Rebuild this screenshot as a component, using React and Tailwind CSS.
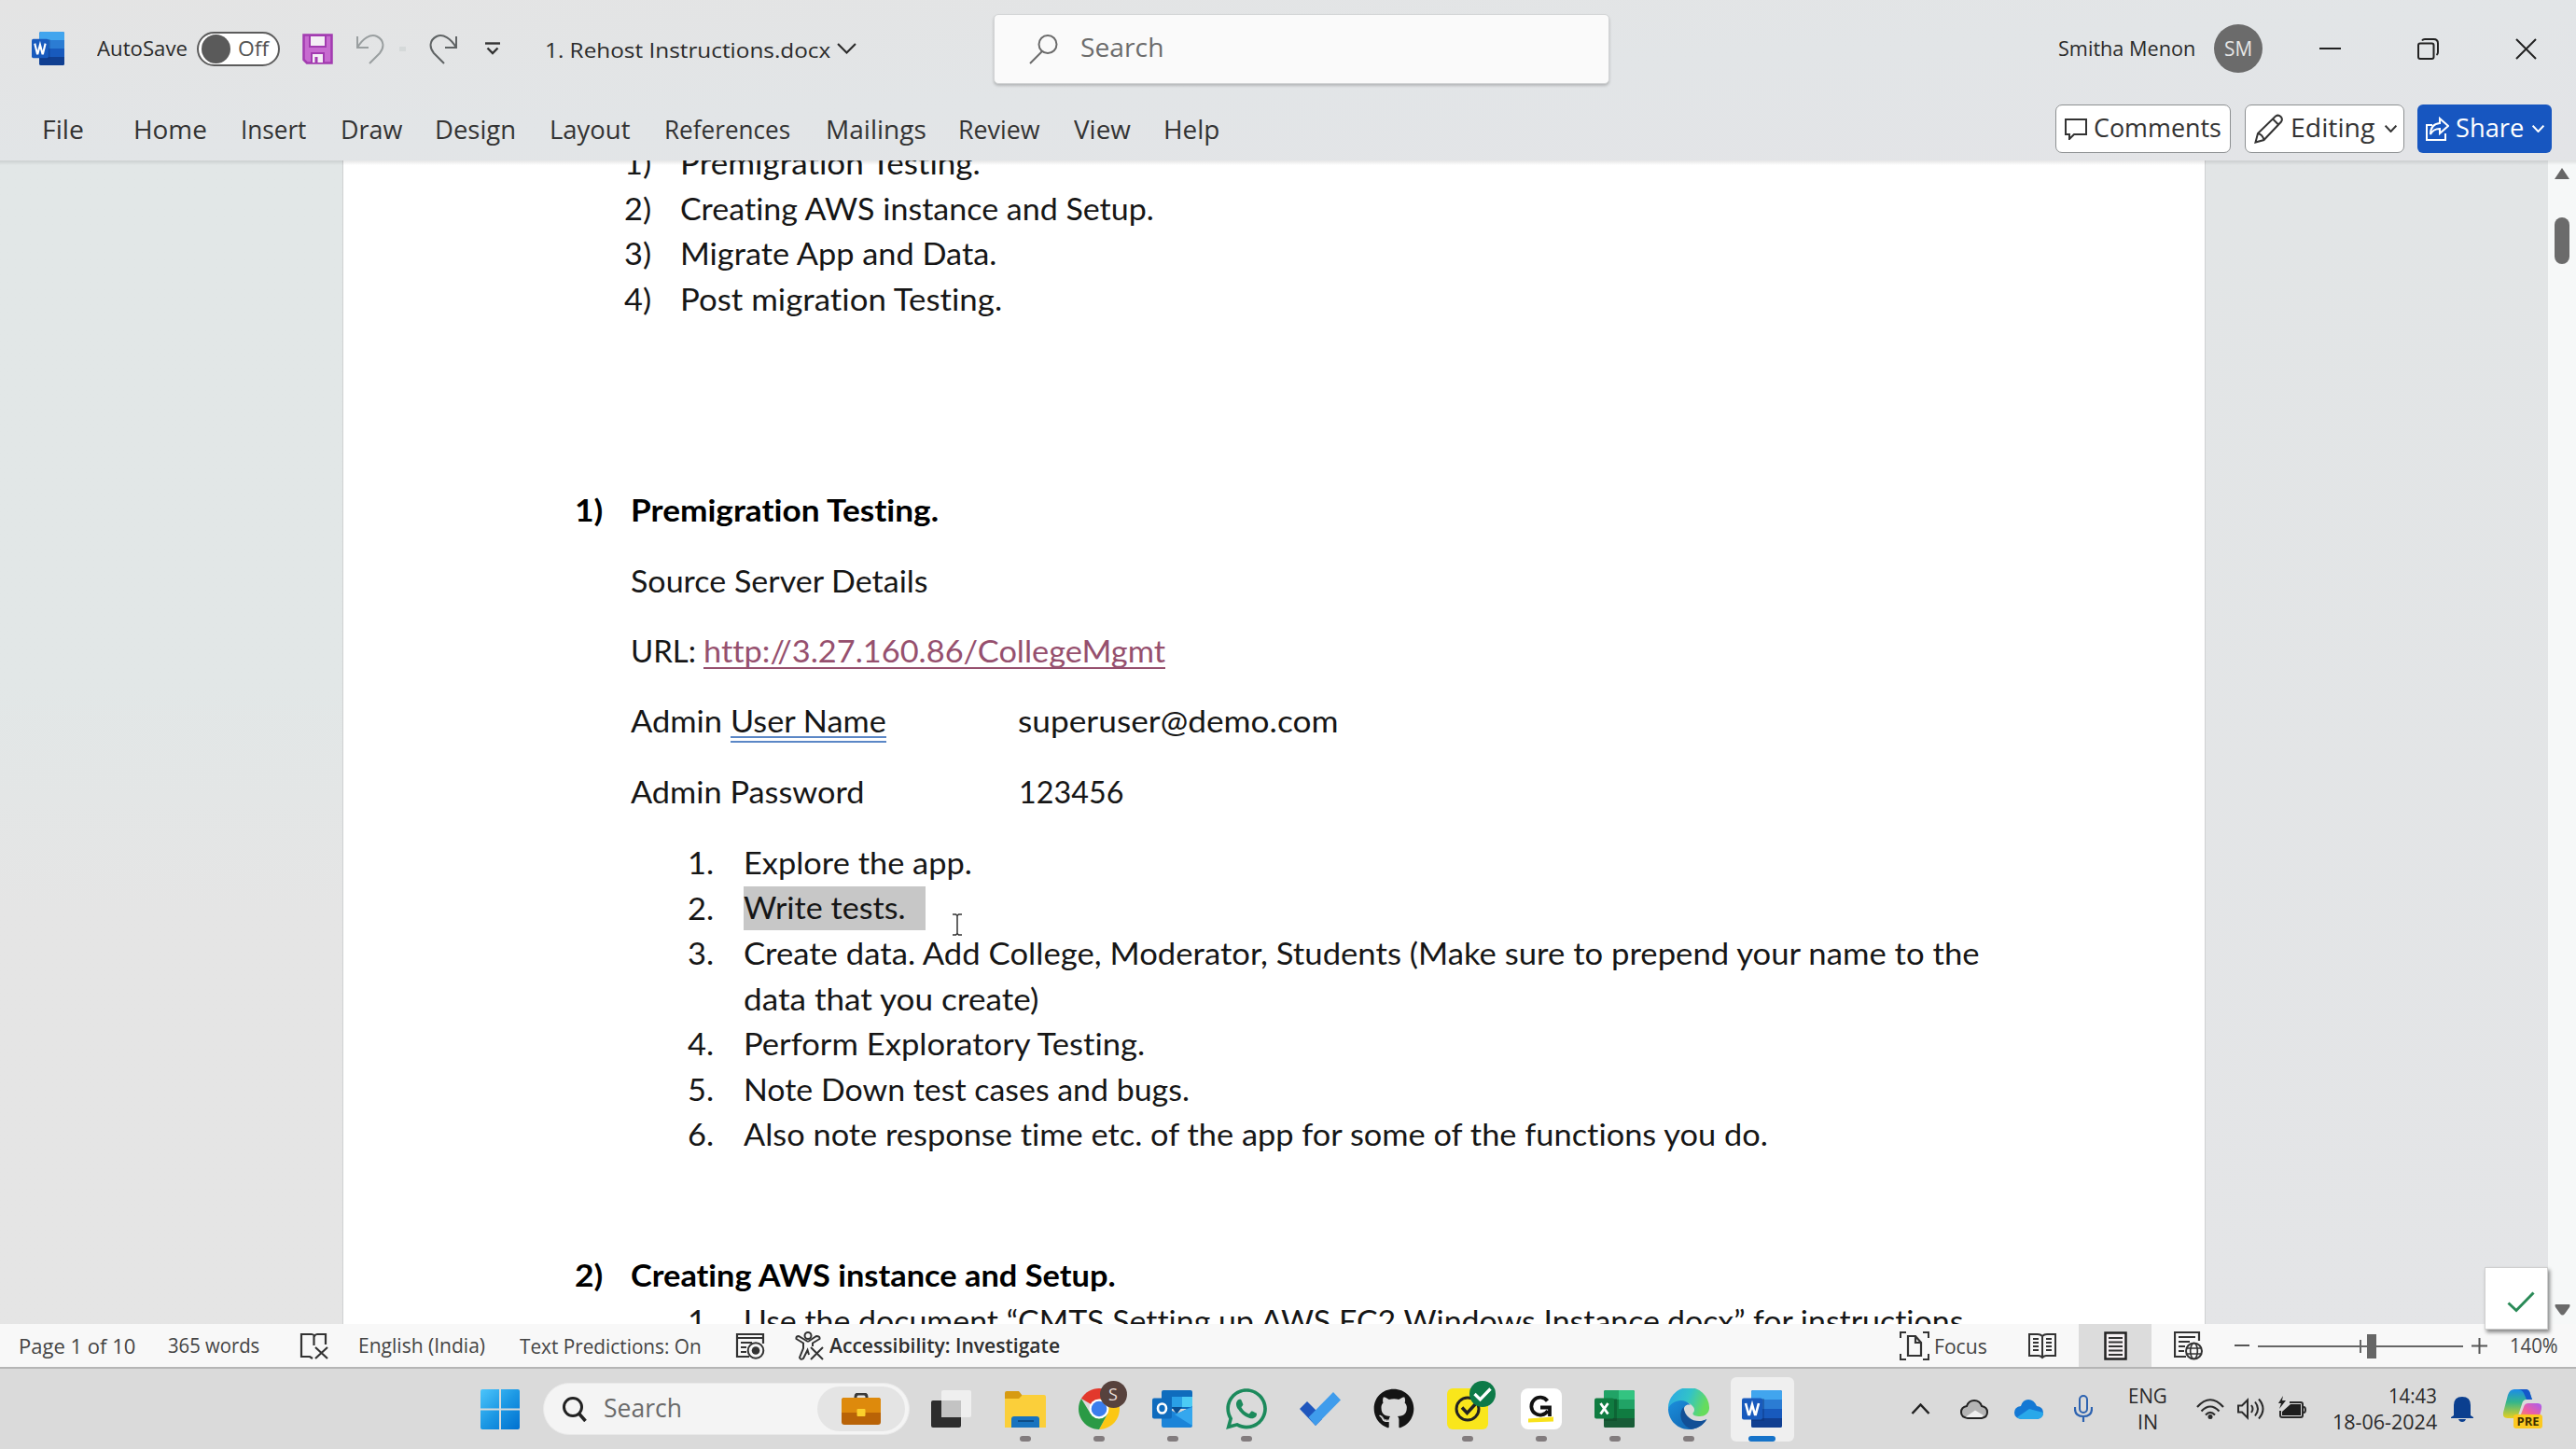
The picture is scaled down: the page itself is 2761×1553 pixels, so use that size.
import React, { useLayoutEffect, useRef, useState } from "react";
import { FaGithub, FaWhatsapp } from "react-icons/fa";

/* Text whose glyphs are condensed or widened to fill the width given in its classes. */
function T({ className = "", inner = "", children }) {
  const box = useRef(null);
  const text = useRef(null);
  const [scale, setScale] = useState(1);
  useLayoutEffect(() => {
    setScale(box.current.offsetWidth / text.current.offsetWidth);
  }, []);
  return (
    <span ref={box} className={`inline-block shrink-0 whitespace-nowrap ${className}`}>
      <span ref={text} className={`inline-block origin-left ${inner}`} style={{ transform: `scaleX(${scale})` }}>
        {children}
      </span>
    </span>
  );
}

function Svg({ className, box, children }) {
  return (
    <svg className={`block shrink-0 ${className}`} viewBox={box} fill="none" preserveAspectRatio="none">
      {children}
    </svg>
  );
}

function Chevron({ className, w = 2 }) {
  return (
    <Svg className={className} box="0 0 20 12">
      <path d="M1 1 L10 10.5 L19 1" stroke="currentColor" strokeWidth={w} />
    </Svg>
  );
}

function WordIcon({ className }) {
  return (
    <Svg className={className} box="0 0 43 40">
      <rect x="10" y="0" width="33" height="40" rx="2" fill="#185abd" />
      <path d="M12 0h29a2 2 0 0 1 2 2v9H10V2a2 2 0 0 1 2-2z" fill="#41a5ee" />
      <rect x="10" y="10" width="33" height="10" fill="#2b7cd3" />
      <rect x="10" y="20" width="33" height="10" fill="#185abd" />
      <path d="M10 30h33v8a2 2 0 0 1-2 2H12a2 2 0 0 1-2-2z" fill="#103f91" />
      <rect x="10" y="9" width="14" height="24" fill="#0b2f70" opacity=".35" />
      <rect x="0" y="8.500" width="22" height="23" rx="2" fill="#185abd" />
      <path d="M4 14l3.200 12h.8L11 15.500 14 26h.8L18 14" stroke="#fff" strokeWidth="2.600" />
    </Svg>
  );
}

function TitleBar() {
  return (
    <div className="flex h-[104px] items-center text-[21.5px] text-[#2b2b2b]">
      <WordIcon className="ml-[34px] h-[36px] w-[35px]" />
      <T className="ml-[35px] w-[97px]">AutoSave</T>
      <div className="ml-[10px] flex h-[37px] w-[89px] items-center rounded-full border-2 border-[#5c5c5c] bg-white">
        <div className="ml-[3px] size-[31px] shrink-0 rounded-full bg-[#5a5a5a]" />
        <T className="ml-[8px] w-[33px] text-[#555]">Off</T>
      </div>
      <Svg className="ml-[24px] h-[33px] w-[33px]" box="0 0 33 33">
        <path d="M1.500 1.500h30v30H5l-3.500-3.500z" fill="#c76bd0" stroke="#a23bb0" strokeWidth="2.500" />
        <path d="M8 2h17v12H8z" fill="#f4eef5" stroke="#a23bb0" strokeWidth="2" />
        <path d="M10 31V21h13v10" fill="#f4eef5" stroke="#a23bb0" strokeWidth="2" />
        <path d="M15 31v-6" stroke="#a23bb0" strokeWidth="3" />
      </Svg>
      <Svg className="ml-[24px] h-[33px] w-[31px]" box="0 0 31 33">
        <path d="M2 3v12h12M2 15C8 5 16 0 23 3c8 4 8 12 3 18L15 32" stroke="#9a9fa0" strokeWidth="2" />
      </Svg>
      <div className="ml-[16px] h-[5px] w-[7px] bg-[#d5d9d9]" />
      <Svg className="ml-[25px] h-[33px] w-[31px]" box="0 0 31 33">
        <path d="M29 3v12H17M29 15C23 5 15 0 8 3 0 7 0 15 5 21l11 11" stroke="#5f6364" strokeWidth="2" />
      </Svg>
      <Svg className="ml-[29px] h-[14px] w-[16px]" box="0 0 16 14">
        <path d="M0 1.500h16" stroke="#333" strokeWidth="2.400" />
        <path d="M2.500 6.500L8 12l5.500-5.500" stroke="#333" strokeWidth="2.400" />
      </Svg>
      <T className="ml-[48px] mt-[3px] w-[306px] text-[22.5px]">1. Rehost Instructions.docx</T>
      <Chevron className="ml-[7px] h-[12px] w-[21px]" />
      <div className="ml-[147px] flex h-[75px] w-[660px] shrink-0 items-center rounded-[5px] border border-[#d2d4d5] bg-[#fafafa] shadow-[0_2px_3px_rgba(0,0,0,0.2)]">
        <Svg className="ml-[37px] h-[33px] w-[31px]" box="0 0 31 33">
          <circle cx="20" cy="11.500" r="9.500" stroke="#6a6a6a" strokeWidth="2" />
          <path d="M14 19L1 32" stroke="#6a6a6a" strokeWidth="2" />
        </Svg>
        <T className="-mt-[2px] ml-[24px] w-[90px] text-[27px] text-[#6c6c6c]">Search</T>
      </div>
      <T className="ml-[481px] w-[147px]">Smitha Menon</T>
      <div className="ml-[20px] flex size-[52px] shrink-0 items-center justify-center rounded-full bg-[#6b6b6b] text-[#e6e6e6]">
        <T className="w-[30px]">SM</T>
      </div>
      <div className="ml-[61px] h-[2px] w-[23px] shrink-0 bg-[#222]" />
      <Svg className="ml-[82px] h-[23px] w-[23px]" box="0 0 23 23">
        <rect x="1" y="5.500" width="16.500" height="16.500" rx="2" stroke="#222" strokeWidth="2" />
        <path d="M5 2.500Q6 1 8 1h9.500q4.500 0 4.500 4.500V15q0 2-1.500 3" stroke="#222" strokeWidth="2" />
      </Svg>
      <Svg className="ml-[82px] h-[23px] w-[23px]" box="0 0 23 23">
        <path d="M1 1l21 21M22 1L1 22" stroke="#222" strokeWidth="2" />
      </Svg>
    </div>
  );
}

function Tabs() {
  return (
    <div className="flex h-[68px] items-center text-[26.5px] text-[#333]">
      <div className="mt-[4px] flex items-center">
        <T className="ml-[45px] w-[45px]">File</T>
        <T className="ml-[53px] w-[79px]">Home</T>
        <T className="ml-[36px] w-[70px]">Insert</T>
        <T className="ml-[37px] w-[66px]">Draw</T>
        <T className="ml-[35px] w-[87px]">Design</T>
        <T className="ml-[36px] w-[86px]">Layout</T>
        <T className="ml-[37px] w-[135px]">References</T>
        <T className="ml-[38px] w-[108px]">Mailings</T>
        <T className="ml-[34px] w-[88px]">Review</T>
        <T className="ml-[36px] w-[61px]">View</T>
        <T className="ml-[35px] w-[60px]">Help</T>
      </div>
      <div className="ml-auto mr-[26px] flex text-[26.5px]">
        <div className="flex h-[52px] w-[188px] items-center rounded-[7px] border border-[#8d9092] bg-white">
          <Svg className="ml-[9px] h-[23px] w-[24px]" box="0 0 24 23">
            <path d="M1 1h22v16H10l-5 5v-5H1z" stroke="#333" strokeWidth="2" />
          </Svg>
          <T className="ml-[7px] w-[137px]">Comments</T>
        </div>
        <div className="ml-[15px] flex h-[52px] w-[171px] items-center rounded-[7px] border border-[#8d9092] bg-white">
          <Svg className="ml-[9px] h-[32px] w-[32px]" box="0 0 32 32">
            <path d="M1.500 30.500L4 21 23 2.500q3-2 5.500.500t.500 5.500L10.500 28zM4 21q5 1 6.500 7M20 5.500l6 6" stroke="#333" strokeWidth="2" />
          </Svg>
          <T className="ml-[7px] w-[90px]">Editing</T>
          <Chevron className="ml-[11px] h-[8px] w-[13px]" w={3} />
        </div>
        <div className="ml-[14px] flex h-[52px] w-[144px] items-center rounded-[6px] bg-[#1756c0] text-white">
          <Svg className="ml-[9px] h-[26px] w-[25px]" box="0 0 25 26">
            <path d="M7 9H1v16h20v-7M15 2l9 8-9 8v-5q-7 0-10 6 0-11 10-12z" stroke="#fff" strokeWidth="2" />
          </Svg>
          <T className="ml-[7px] w-[73px]">Share</T>
          <Chevron className="ml-[9px] h-[8px] w-[13px]" w={3} />
        </div>
      </div>
    </div>
  );
}

function Item({ n, children, className = "" }) {
  return (
    <div className={`flex h-[48.5px] items-center pl-[369px] ${className}`}>
      <T className="w-[28px]">{n}</T>
      <div className="ml-[32px] flex">{children}</div>
    </div>
  );
}

function TopItem({ n, children }) {
  return (
    <div className="flex h-[48.5px] items-center pl-[301px]">
      <T className="w-[29px]">{n}</T>
      <div className="ml-[31px] flex">{children}</div>
    </div>
  );
}

function Page() {
  return (
    <div className="relative w-[1997px] shrink-0 overflow-hidden border-x border-[#cfd1d2] bg-white font-['Lato',sans-serif] text-[32px] leading-[48px] text-[#161616] [font-variant-ligatures:none]">
      <div className="-mt-[21px]">
        <TopItem n="1)"><T className="w-[322px]">Premigration Testing.</T></TopItem>
        <TopItem n="2)"><T className="w-[508px]">Creating AWS instance and Setup.</T></TopItem>
        <TopItem n="3)"><T className="w-[339px]">Migrate App and Data.</T></TopItem>
        <TopItem n="4)"><T className="w-[345px]">Post migration Testing.</T></TopItem>
      </div>
      <div className="mt-[177px] flex h-[50px] items-center pl-[248px] font-bold text-black">
        <T className="w-[30px]">1)</T>
        <T className="ml-[30px] w-[330px]">Premigration Testing.</T>
      </div>
      <div className="ml-[308px]">
        <div className="mt-[26px] flex h-[50px] items-center"><T className="w-[319px]">Source Server Details</T></div>
        <div className="mt-[25px] flex h-[50px] items-center">
          <T className="w-[70px]">URL:</T>
          <span className="relative ml-[8px] flex text-[#96506e]">
            <T className="w-[495px]">http://3.27.160.86/CollegeMgmt</T>
            <span className="absolute bottom-[5px] left-0 h-[2.500px] w-full bg-[#96506e]" />
          </span>
        </div>
        <div className="mt-[25px] flex h-[50px] items-center">
          <T className="w-[98px]">Admin</T>
          <span className="relative ml-[9px] flex">
            <T className="w-[167px]">User Name</T>
            <span className="absolute bottom-[1px] left-0 h-[7px] w-full border-y-2 border-[#5b87c6]" />
          </span>
          <T className="ml-[141px] w-[343px]">superuser@demo.com</T>
        </div>
        <div className="mt-[26px] flex h-[50px] items-center">
          <T className="w-[251px]">Admin Password</T>
          <T className="ml-[165px] w-[112px]">123456</T>
        </div>
      </div>
      <Item className="mt-[27px]" n="1."><T className="w-[245px]">Explore the app.</T></Item>
      <Item n="2.">
        <span className="flex h-[47px] w-[195px] items-center bg-[#c7c7c7]"><T className="-mt-[1px] w-[174px]">Write tests.</T></span>
      </Item>
      <Item n="3."><T className="w-[1325px]">Create data. Add College, Moderator, Students (Make sure to prepend your name to the</T></Item>
      <div className="flex h-[48.5px] items-center pl-[429px]"><T className="w-[316px]">data that you create)</T></div>
      <Item n="4."><T className="w-[430px]">Perform Exploratory Testing.</T></Item>
      <Item n="5."><T className="w-[478px]">Note Down test cases and bugs.</T></Item>
      <Item n="6."><T className="w-[1098px]">Also note response time etc. of the app for some of the functions you do.</T></Item>
      <div className="mt-[102px] flex h-[49px] items-center pl-[248px] font-bold text-black">
        <T className="w-[30px]">2)</T>
        <T className="ml-[30px] w-[520px]">Creating AWS instance and Setup.</T>
      </div>
      <Item n="1."><T className="w-[1315px]">Use the document “CMTS Setting up AWS EC2 Windows Instance.docx” for instructions.</T></Item>
      <Svg className="absolute left-[652px] top-[807px] h-[24px] w-[12px]" box="0 0 12 24">
        <path d="M1 1h3.500L6 2.500 7.500 1H11M6 2.500v19M1 23h3.500L6 21.500 7.500 23H11" stroke="#333" strokeWidth="1.500" />
      </Svg>
    </div>
  );
}

function Document() {
  return (
    <div className="relative flex h-[1247px] overflow-hidden">
      <div className="w-[367px] shrink-0 bg-linear-to-b from-[#e2e7e7] from-45% to-[#e5e5e5] to-65%" />
      <Page />
      <div className="grow bg-linear-to-b from-[#e2e5e6] to-[#e4e5e7]" />
      <div className="flex w-[30px] flex-col items-center bg-[#f6f8f8]">
        <Svg className="mt-[8px] h-[12px] w-[16px]" box="0 0 16 12"><path d="M8 0l8 12H0z" fill="#666" /></Svg>
        <div className="mt-[41px] h-[50px] w-[16px] rounded-full bg-[#6b6b6b]" />
        <Svg className="mb-[9px] mt-auto h-[12px] w-[17px]" box="0 0 17 12"><path d="M1 0h15q1 1 0 3l-5 7q-2.500 3-5 0L1 3q-1-2 0-3z" fill="#6a6a6a" /></Svg>
      </div>
      <div className="absolute left-0 top-0 h-[5px] w-full bg-linear-to-b from-black/10 to-transparent" />
    </div>
  );
}

function StatusBar() {
  return (
    <div className="relative flex h-[48px] items-center border-b-2 border-[#b5b5b5] bg-[#f8f8f8] text-[21.5px] text-[#444]">
      <T className="mt-[2px] ml-[20px] w-[125px]">Page 1 of 10</T>
      <T className="ml-[35px] w-[98px]">365 words</T>
      <Svg className="ml-[43px] h-[29px] w-[31px]" box="0 0 31 29">
        <path d="M28 13V2h-9q-2 0-3 2-1-2-3-2H2v24h9l3 2M15.500 4v10" stroke="#333" strokeWidth="2.200" />
        <path d="M17 16l13 12M30 16L17 28" stroke="#333" strokeWidth="2.200" />
      </Svg>
      <T className="ml-[32px] w-[136px]">English (India)</T>
      <T className="mt-[2px] ml-[37px] w-[195px]">Text Predictions: On</T>
      <Svg className="ml-[36px] h-[29px] w-[32px]" box="0 0 32 29">
        <path d="M30 12V2H2v24h13M2 6h28M6 11h12M6 16h6M6 21h6" stroke="#333" strokeWidth="2.200" />
        <circle cx="22" cy="19.500" r="8.300" stroke="#333" strokeWidth="2" />
        <circle cx="22" cy="19.500" r="4.300" fill="#333" />
      </Svg>
      <Svg className="ml-[32px] h-[31px] w-[31px]" box="0 0 31 31">
        <circle cx="14" cy="4.500" r="3.500" stroke="#333" strokeWidth="2" />
        <path d="M14 11L4 5Q1 5 1.500 8L9 12.500V18L5 28q1 3 4 1l4.500-9 1.500 5M14 11l9-6q4 0 3.500 3L19 12.500V16" stroke="#333" strokeWidth="2" />
        <path d="M17 17l13 13M30 17L17 30" stroke="#333" strokeWidth="2" />
      </Svg>
      <T className="ml-[6px] w-[247px] font-semibold text-[#2e2e2e]">Accessibility: Investigate</T>
      <Svg className="ml-auto h-[31px] w-[32px]" box="0 0 32 31">
        <path d="M1 7V1h6M25 1h6v6M31 24v6h-6M7 30H1v-6" stroke="#333" strokeWidth="2" />
        <path d="M9 5h8l6 7v14H9zM17 5v7h6" stroke="#333" strokeWidth="2.200" />
      </Svg>
      <T className="mt-[2px] ml-[5px] w-[57px]">Focus</T>
      <Svg className="ml-[44px] h-[29px] w-[30px]" box="0 0 30 29">
        <path d="M15 4Q13 2 10 2H1v23h10q2 0 4 2 2-2 4-2h10V2h-9q-3 0-5 2v23M5 7h6M5 11h6M5 15h6M5 19h6M19 7h6M19 11h6M19 15h6M19 19h6" stroke="#333" strokeWidth="2" />
      </Svg>
      <div className="ml-[24px] flex h-full w-[78px] items-center justify-center bg-[#dcdcdc]">
        <Svg className="h-[31px] w-[25px]" box="0 0 25 31">
          <rect x="1.500" y="1.500" width="22" height="28" stroke="#222" strokeWidth="2.500" fill="#f5f0f2" />
          <path d="M5 7h15M5 11.500h15M5 16h15M5 20.500h15M5 25h15" stroke="#333" strokeWidth="2" />
        </Svg>
      </div>
      <Svg className="ml-[24px] h-[31px] w-[31px]" box="0 0 31 31">
        <path d="M27 10V1H1v26h12M5 6h18M5 11h12M5 16h7M5 21h6" stroke="#333" strokeWidth="2.200" />
        <circle cx="21.500" cy="21" r="8.500" stroke="#333" strokeWidth="2" />
        <ellipse cx="21.500" cy="21" rx="3.800" ry="8.500" stroke="#333" strokeWidth="1.700" />
        <path d="M13 18h17M13 24h17" stroke="#333" strokeWidth="1.700" />
      </Svg>
      <div className="ml-[34px] h-[2px] w-[16px] bg-[#555]" />
      <div className="relative ml-[9px] mt-[1px] flex h-[26px] w-[220px] items-center">
        <div className="h-[2px] w-full bg-[#666]" />
        <div className="absolute left-[109px] top-[6px] h-[14px] w-[2px] bg-[#666]" />
        <div className="absolute left-[117px] top-0 h-[26px] w-[10px] bg-[#666]" />
      </div>
      <Svg className="ml-[9px] size-[17px]" box="0 0 17 17"><path d="M0 8.500h17M8.500 0v17" stroke="#555" strokeWidth="2" /></Svg>
      <T className="ml-[24px] mr-[19px] w-[52px]">140%</T>
      <div className="absolute -top-[61px] right-[30px] flex h-[67px] w-[68px] items-end justify-center border border-[#d0d0d0] bg-white pb-[17px] pl-[10px] shadow-[2px_3px_4px_rgba(0,0,0,0.45)]">
        <Svg className="h-[23px] w-[30px]" box="0 0 30 23"><path d="M1.500 12.500L10 20.500 28.500 1.500" stroke="#2a8a57" strokeWidth="3" /></Svg>
      </div>
    </div>
  );
}

function Slot({ dot = true, active = false, children }) {
  return (
    <div className="flex h-full w-[79px] shrink-0 justify-center">
      <div className={`relative flex h-[69px] w-[68px] items-center justify-center self-center rounded-[6px] ${active ? "bg-[#efefef]" : ""}`}>
        {children}
        {dot && <div className={`absolute bottom-0 h-[6px] rounded-full ${active ? "w-[29px] bg-[#1673c9]" : "w-[12px] bg-[#827c7e]"}`} />}
      </div>
    </div>
  );
}

function Taskbar() {
  return (
    <div className="flex h-[86px] items-center bg-[#dadada]">
      <Svg className="ml-[515px] h-[43px] w-[42px]" box="0 0 42 43">
        <defs>
          <linearGradient id="win" x1="0" y1="0" x2="42" y2="43" gradientUnits="userSpaceOnUse">
            <stop stopColor="#4cc5fb" /><stop offset=".5" stopColor="#1c98e4" /><stop offset="1" stopColor="#0070cf" />
          </linearGradient>
        </defs>
        <path d="M2 0h18v20.500H0V2q0-2 2-2zM22 0h18q2 0 2 2v18.500H22zM0 22.500h20V43H2q-2 0-2-2zM22 22.500h20V41q0 2-2 2H22z" fill="url(#win)" />
      </Svg>
      <div className="ml-[25px] flex h-[56px] w-[393px] shrink-0 items-center rounded-full border border-[#e9e9e9] bg-[#f4f4f4]">
        <Svg className="ml-[20px] h-[27px] w-[26px]" box="0 0 26 27">
          <circle cx="11" cy="11" r="9.500" stroke="#222" strokeWidth="3" />
          <path d="M17.500 18l7 8" stroke="#222" strokeWidth="3.500" />
        </Svg>
        <T className="-mt-[1px] ml-[18px] w-[84px] text-[26.5px] text-[#6a6a6a]">Search</T>
        <div className="ml-auto mr-[4px] flex h-[48px] w-[94px] items-center justify-center rounded-full bg-[#e4e4e4]">
          <Svg className="h-[34px] w-[42px]" box="0 0 42 34">
            <path d="M15 6V4q0-3 3-3h6q3 0 3 3v2" stroke="#3b3b3b" strokeWidth="3" />
            <rect y="5" width="42" height="29" rx="3" fill="#b96307" />
            <path d="M3 5h36q3 0 3 3v13H0V8q0-3 3-3z" fill="#de8a0c" />
            <rect x="16.500" y="17" width="9" height="8" rx="1" fill="#fbd02c" />
          </Svg>
        </div>
      </div>
      <div className="ml-[5px] flex h-full">
        <Slot dot={false}>
          <Svg className="h-[40px] w-[43px]" box="0 0 43 40">
            <rect y="11" width="32" height="29" rx="2" fill="#2d2d2d" />
            <rect x="11" width="32" height="29" rx="2" fill="#efefef" />
            <rect x="11" y="11" width="21" height="18" fill="#c3c3c3" />
          </Svg>
        </Slot>
        <Slot>
          <Svg className="h-[39px] w-[44px]" box="0 0 44 39">
            <path d="M0 2q0-2 2-2h13l4 5v6H0z" fill="#d79b11" />
            <path d="M0 8h15l4-4h23q2 0 2 2v33H0z" fill="#fbcf3a" />
            <path d="M7 39V30q0-3 3-3h24q3 0 3 3v9z" fill="#1873bf" />
            <path d="M14 32h17" stroke="#0d4d88" strokeWidth="2" />
          </Svg>
        </Slot>
        <Slot>
          <Svg className="size-[44px]" box="-22 -22 44 44">
            <path d="M0 0L-19.050-11A22 22 0 0 1 19.050-11z" fill="#e2382c" />
            <path d="M0-10.500H19.300A22 22 0 0 1 0 22L9.100 5.250z" fill="#fbc714" />
            <path d="M-19.050-11L-9.100 5.250 0 10.500 9.100 5.250 0 22A22 22 0 0 1-19.050-11z" fill="#2a9a45" />
            <circle r="10.500" fill="#fff" /><circle r="8.300" fill="#3b7ded" />
          </Svg>
          <div className="absolute left-[35px] top-[4px] flex size-[29px] items-center justify-center rounded-full bg-[#57423d] text-[18px] leading-none text-[#eadfdb]">S</div>
        </Slot>
        <Slot>
          <Svg className="h-[40px] w-[43px]" box="0 0 43 40">
            <path d="M12 0h29q2 0 2 2v18H10V2q0-2 2-2z" fill="#0f6cbd" />
            <path d="M21 7h11v11H21z" fill="#2aa0e6" /><path d="M32 7h11v11H32z" fill="#4ccbf5" />
            <path d="M21 18h11l-6 8z" fill="#0a4f91" />
            <path d="M10 16l17 9 16-8v21q0 2-2 2H12q-2 0-2-2z" fill="#1b84d8" />
            <path d="M43 18v20L24 26z" fill="#35a7ee" />
            <rect y="8.500" width="21" height="22" rx="2" fill="#0f6bbd" />
            <ellipse cx="10.500" cy="19.500" rx="4.500" ry="5" stroke="#fff" strokeWidth="2.600" />
          </Svg>
        </Slot>
        <Slot><FaWhatsapp className="size-[50px] shrink-0 text-[#1c8a5c]" /></Slot>
        <Slot dot={false}>
          <Svg className="h-[36px] w-[44px]" box="0 0 44 36">
            <path d="M0 18l8-8 10 10 6 9-7 7z" fill="#1f56bd" />
            <path d="M9.500 27L36 0l8 8.500L17 36z" fill="#3f9cec" />
          </Svg>
        </Slot>
        <Slot dot={false}><FaGithub className="size-[44px] shrink-0 text-[#141414]" /></Slot>
        <Slot>
          <Svg className="size-[44px]" box="0 0 44 44">
            <rect width="44" height="44" rx="6" fill="#f9e61b" />
            <circle cx="22" cy="22" r="12" stroke="#222" strokeWidth="3" />
            <path d="M16 20.500l5.500 6L33 14" stroke="#222" strokeWidth="3.500" />
          </Svg>
          <Svg className="absolute left-[36px] top-[4px] size-[28px]" box="0 0 28 28">
            <circle cx="14" cy="14" r="14" fill="#0d7a48" />
            <path d="M5.500 14l6 6L22.500 8.500" stroke="#fff" strokeWidth="3.300" />
          </Svg>
        </Slot>
        <Slot>
          <Svg className="size-[44px]" box="0 0 44 44">
            <rect width="44" height="44" rx="8" fill="#fff" />
            <path d="M8 32.500l27-2v5L8 36.500z" fill="#f8e21c" />
            <path d="M28.500 13.500A9.500 9.500 0 1 0 29 24M21 20.500h10V30" stroke="#111" strokeWidth="3.800" />
          </Svg>
        </Slot>
        <Slot>
          <Svg className="h-[40px] w-[43px]" box="0 0 43 40">
            <rect x="10" width="33" height="40" rx="2" fill="#107c41" />
            <path d="M26 0h15q2 0 2 2v8H26z" fill="#33c481" />
            <path d="M12 0h14v10H10V2q0-2 2-2z" fill="#21a366" />
            <rect x="26" y="10" width="17" height="10" fill="#21a366" />
            <path d="M10 30h33v8q0 2-2 2H12q-2 0-2-2z" fill="#185c37" />
            <rect x="10" y="9" width="14" height="24" fill="#093d20" opacity=".35" />
            <rect y="8.500" width="21" height="22" rx="2" fill="#107c41" />
            <path d="M6.500 14l8 11.500M14.500 14l-8 11.500" stroke="#fff" strokeWidth="2.800" />
          </Svg>
        </Slot>
        <Slot>
          <Svg className="size-[44px]" box="0 0 44 44">
            <defs>
              <linearGradient id="edgeA" x1="0" y1="0" x2="1" y2=".3"><stop stopColor="#2aa5e8" /><stop offset=".55" stopColor="#32c3c8" /><stop offset="1" stopColor="#66dc5c" /></linearGradient>
              <linearGradient id="edgeB" x1="0" y1="0" x2="1" y2="1"><stop stopColor="#1b8fdc" /><stop offset="1" stopColor="#0f5ca8" /></linearGradient>
            </defs>
            <path d="M0 22A22 22 0 0 1 44 20c.5 6-4 10-10 10-5 0-8-1.500-7.500-3.500 2-2 2-5 0-7C23 15 10 9 0 22z" fill="url(#edgeA)" />
            <path d="M0 22C3 13 17 9 24 18c-5-2-9 3-7 9 3 8 14 12 24 6C36 41 29 44 22 44 10 44 0 34 0 22z" fill="url(#edgeB)" />
            <path d="M16.500 20C11 26 12 39 25 43.700 32 43 38 39 41.500 33 32 38 18 34 16.500 20z" fill="#124f96" />
          </Svg>
        </Slot>
        <Slot active><WordIcon className="h-[40px] w-[43px]" /></Slot>
      </div>
      <div className="ml-auto mr-[36px] flex items-center text-[#2a2a2a]">
        <Svg className="h-[12px] w-[21px]" box="0 0 21 12"><path d="M1.500 11L10.500 1.500 19.500 11" stroke="#222" strokeWidth="2.500" /></Svg>
        <Svg className="ml-[32px] h-[21px] w-[30px]" box="0 0 30 21">
          <path d="M8 20q-7-1-7-6.500T7 7Q9 1 15 1t8 6q6 1 6 6.500T23 20z" fill="#b4b4b4" stroke="#222" strokeWidth="2" />
          <path d="M6 18.500l10-7 9 5.500-2 2H8z" fill="#eee" />
        </Svg>
        <Svg className="ml-[28px] h-[21px] w-[31px]" box="0 0 31 21">
          <path d="M8 21q-8-1-8-7t7-7Q9 0 15 0t9 7q7 1 7 7t-7 7z" fill="#1478d4" />
          <path d="M3 19l13-9 15 4q0 6-7 7H8q-3 0-5-2z" fill="#28a8ea" />
        </Svg>
        <Svg className="ml-[33px] h-[30px] w-[20px]" box="0 0 20 30">
          <rect x="6" y="1" width="8" height="18" rx="4" stroke="#2c62b0" strokeWidth="2" />
          <path d="M1 13v2q0 8 9 8t9-8v-2M10 23v6" stroke="#2c62b0" strokeWidth="2.200" />
        </Svg>
        <div className="ml-[38px] flex w-[42px] flex-col items-center text-[21.5px] leading-[28.5px]">
          <T className="w-[42px]">ENG</T>
          <T className="w-[22px]">IN</T>
        </div>
        <Svg className="ml-[31px] h-[22px] w-[30px]" box="0 0 30 22">
          <path d="M1 9Q15-6.500 29 9M5.500 13.500q9.500-10 19 0M10 17.500q5-5 10 0" stroke="#2a2a2a" strokeWidth="2.200" />
          <circle cx="15" cy="19.500" r="2.500" fill="#2a2a2a" />
        </Svg>
        <Svg className="ml-[14px] h-[24px] w-[30px]" box="0 0 30 24">
          <path d="M1 8.500h4l6-6v19l-6-6H1zM15 8q3 4 0 8M19 4.500q6 7.500 0 15M23 1.500q9 10.500 0 21" stroke="#2a2a2a" strokeWidth="2" />
        </Svg>
        <Svg className="-mt-[3px] ml-[13px] h-[25px] w-[31px]" box="0 0 31 25">
          <path d="M13 7h12q2 0 2 2v12q0 2-2 2H5q-2 0-2-2v-5M28 12q2 0 2 3t-2 3" stroke="#2a2a2a" strokeWidth="2" />
          <path d="M14 9h11v12H5v-4z" fill="#1d1d1d" /><path d="M6 0L1 8h3l-2 6 7-9H5z" fill="#222" />
        </Svg>
        <div className="ml-[27px] flex w-[113px] flex-col items-end text-[21.5px] leading-[28.5px]">
          <T className="w-[52px]">14:43</T>
          <T className="w-[112px]">18-06-2024</T>
        </div>
        <Svg className="ml-[15px] h-[28px] w-[24px]" box="0 0 24 28">
          <path d="M3 21v-11Q3 1 12 1t9 9v11l3 2v1H0v-1z" fill="#0b3f8f" /><path d="M8 25h8q-1 3-4 3t-4-3z" fill="#0b3f8f" />
        </Svg>
        <Svg className="ml-[32px] h-[42px] w-[42px]" box="0 0 42 42">
          <defs>
            <linearGradient id="copA" x1="0" y1="0" x2="0" y2="1"><stop stopColor="#1b8bea" /><stop offset=".45" stopColor="#35b68a" /><stop offset="1" stopColor="#e9d01e" /></linearGradient>
            <linearGradient id="copB" x1="1" y1="0" x2="0" y2="1"><stop stopColor="#a95cf0" /><stop offset=".55" stopColor="#ee5fa2" /><stop offset="1" stopColor="#f79a4a" /></linearGradient>
          </defs>
          <path d="M12 0h12q4 0 5 5l2 6h-6q-4 0-5 5l-4 12q-1 3-5 3H5q-6 0-5-6L5 6q2-6 7-6z" fill="url(#copA)" />
          <path d="M15 0h9q4 0 5 5l2 6h-6L22 4q-2-4-7-4z" fill="#1558c9" />
          <path d="M27 15h10q5 0 4 6l-3 11H17l5-13q1-4 5-4z" fill="url(#copB)" />
          <rect x="11" y="27" width="31" height="15" rx="3" fill="#fcc921" />
          <text x="26.500" y="39" textAnchor="middle" fontSize="13" fontWeight="700" fill="#3d2f00" fontFamily="Open Sans">PRE</text>
        </Svg>
      </div>
    </div>
  );
}

export default function App() {
  return (
    <div className="flex h-[1553px] w-[2761px] flex-col overflow-hidden bg-[#e4e4e4] font-['Open_Sans',sans-serif]">
      <div className="h-[172px] bg-linear-to-br from-[#e4e4e4] via-[#e2e5e7] to-[#e3e4e7]">
        <TitleBar />
        <Tabs />
      </div>
      <Document />
      <StatusBar />
      <Taskbar />
    </div>
  );
}
